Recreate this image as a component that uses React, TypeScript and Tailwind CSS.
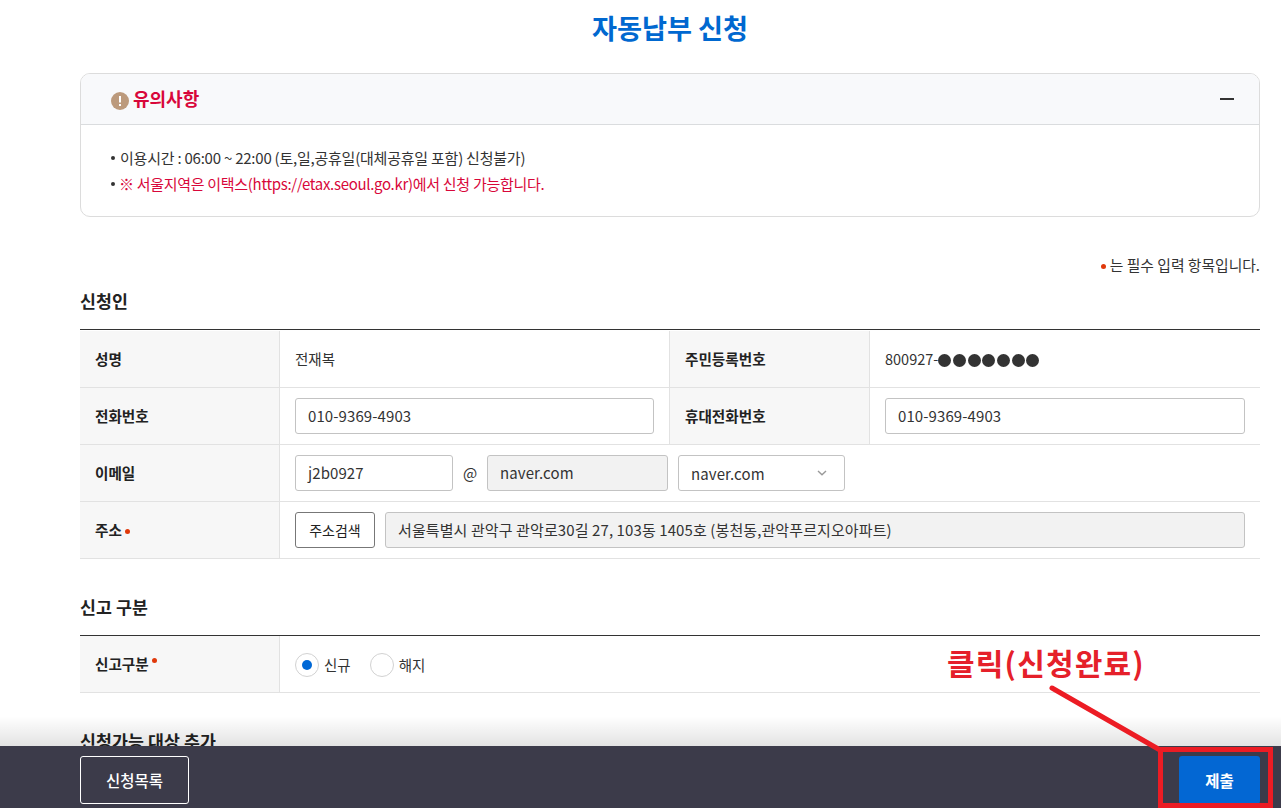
import type { ReactNode } from "react";

const NoticeIcon = () => (
  <svg width="18" height="18" viewBox="0 0 18 18" fill="none">
    <circle cx="9" cy="9" r="9" fill="#bc9a7c" />
    <path d="M8 4h2v6.6H8z" fill="#fff" />
    <path d="M8 12h2v2H8z" fill="#fff" />
  </svg>
);

const ChevronIcon = () => (
  <svg width="10" height="6" viewBox="0 0 10 6" fill="none">
    <path d="M1 1l4 3.8L9 1" stroke="#999" strokeWidth="1.4" />
  </svg>
);

const Required = ({ className = "" }: { className?: string }) => (
  <span className={`inline-block size-[5px] rounded-full bg-[#e0390b] ${className}`} />
);

const SectionTitle = ({ children }: { children: ReactNode }) => (
  <h2 className="h-[27px] text-[17.3px] leading-[26px] font-bold tracking-[0.1px] text-[#222] whitespace-nowrap">
    {children}
  </h2>
);

const Label = ({ children }: { children: ReactNode }) => (
  <div className="flex w-[200px] shrink-0 items-center border-r border-[#e2e2e2] bg-[#f7f7f7] pb-px pl-[15px] text-[14.6px] font-bold text-[#222]">
    {children}
  </div>
);

const Row = ({ children }: { children: ReactNode }) => (
  <div className="flex h-[57px] border-b border-[#e2e2e2]">{children}</div>
);

const Field = ({
  value,
  className = "",
  disabled = false,
}: {
  value: string;
  className?: string;
  disabled?: boolean;
}) => (
  <div
    className={`flex h-9 items-center rounded-[3px] border border-[#c3c3c3] px-3 text-[15px] tracking-[0.1px] whitespace-nowrap ${
      disabled ? "bg-[#f2f2f2]" : "bg-white"
    } ${className}`}
  >
    {value}
  </div>
);

const Radio = ({ label, checked = false }: { label: string; checked?: boolean }) => (
  <label className="flex items-center gap-[5px] text-[14.5px]">
    <span className="flex size-6 items-center justify-center rounded-full border border-[#d2d2d2] bg-white">
      {checked && <span className="size-[10px] rounded-full bg-[#0068d6]" />}
    </span>
    {label}
  </label>
);

const notices = [
  { text: "이용시간 : 06:00 ~ 22:00 (토,일,공휴일(대체공휴일 포함) 신청불가)", warn: false },
  { text: "※ 서울지역은 이택스(https://etax.seoul.go.kr)에서 신청 가능합니다.", warn: true },
];

export default function App() {
  return (
    <div className="relative h-[808px] w-[1281px] overflow-hidden bg-white font-['Noto_Sans_CJK_KR',sans-serif] text-[#333]">
      <main className="ml-20 w-[1180px]">
        <h1 className="h-[73px] pt-[7px] text-center text-[27.2px] leading-[40px] font-bold text-[#0068d0]">
          자동납부 신청
        </h1>

        {/* Notice */}
        <section className="h-36 overflow-hidden rounded-[10px] border border-[#dcdcdc]">
          <div className="flex h-[51px] items-center border-b border-[#dadcde] bg-[#f8f9fb] pr-[25px] pl-[30px]">
            <span className="mt-[3px]">
              <NoticeIcon />
            </span>
            <h2 className="mb-[2px] ml-1 text-[18px] font-bold text-[#d8073a]">유의사항</h2>
            <span className="ml-auto h-[2px] w-[14px] bg-[#333]" />
          </div>
          <ul className="pt-5 pl-[30px]">
            {notices.map((notice) => (
              <li key={notice.text} className="flex h-[26px] items-center">
                <span className="mr-[5px] size-1 rounded-full bg-[#333]" />
                <span
                  className={`text-[15px] whitespace-nowrap ${
                    notice.warn ? "-ml-px tracking-[-0.3px] text-[#d8073a]" : "tracking-[-0.23px]"
                  }`}
                >
                  {notice.text}
                </span>
              </li>
            ))}
          </ul>
        </section>

        <p className="mt-9 flex h-6 items-center justify-end text-[14.8px]">
          <Required className="mt-[3px] mr-1" />는 필수 입력 항목입니다.
        </p>

        {/* Applicant */}
        <section className="mt-[11px]">
          <SectionTitle>신청인</SectionTitle>
          <div className="mt-[14px] border-t border-[#333] pt-px">
            <Row>
              <Label>성명</Label>
              <div className="flex w-[390px] items-center border-r border-[#e2e2e2] px-[15px] text-[14.5px]">
                전재복
              </div>
              <Label>주민등록번호</Label>
              <div className="flex items-center px-[15px] text-[14.5px]">
                800927-
                <span className="mt-[3px] flex gap-[1.7px]">
                  {Array.from({ length: 7 }, (_, i) => (
                    <span key={i} className="size-[13px] rounded-full bg-[#333]" />
                  ))}
                </span>
              </div>
            </Row>
            <Row>
              <Label>전화번호</Label>
              <div className="flex w-[390px] items-center border-r border-[#e2e2e2] px-[15px]">
                <Field value="010-9369-4903" className="w-full" />
              </div>
              <Label>휴대전화번호</Label>
              <div className="flex flex-1 items-center px-[15px]">
                <Field value="010-9369-4903" className="w-full" />
              </div>
            </Row>
            <Row>
              <Label>이메일</Label>
              <div className="flex items-center px-[15px]">
                <Field value="j2b0927" className="w-[158px]" />
                <span className="w-[34px] text-center text-[15px]">@</span>
                <Field value="naver.com" className="w-[181px]" disabled />
                <div className="ml-[10px] flex h-9 w-[167px] items-center justify-between rounded-[3px] border border-[#c3c3c3] pr-[17px] pl-3 text-[15px] tracking-[0.1px]">
                  <span className="mt-[2px]">naver.com</span>
                  <ChevronIcon />
                </div>
              </div>
            </Row>
            <Row>
              <Label>
                주소
                <Required className="mt-[3px] ml-[3px]" />
              </Label>
              <div className="flex flex-1 items-center px-[15px]">
                <button className="h-9 w-20 rounded-[3px] border border-[#777] text-[14px] text-[#222]">
                  주소검색
                </button>
                <Field
                  value="서울특별시 관악구 관악로30길 27, 103동 1405호 (봉천동,관악푸르지오아파트)"
                  className="ml-[10px] flex-1"
                  disabled
                />
              </div>
            </Row>
          </div>
        </section>

        {/* Report type */}
        <section className="mt-[35px]">
          <SectionTitle>신고 구분</SectionTitle>
          <div className="mt-[14px] border-t border-[#333]">
            <Row>
              <Label>
                신고구분
                <Required className="mb-[7px] ml-[3px]" />
              </Label>
              <div className="flex items-center gap-[19px] px-[15px] pt-px">
                <Radio label="신규" checked />
                <Radio label="해지" />
              </div>
            </Row>
          </div>
        </section>

        <section className="mt-[35px]">
          <SectionTitle>신청가능 대상 추가</SectionTitle>
        </section>
      </main>

      {/* Bottom action bar */}
      <footer className="absolute inset-x-0 bottom-0">
        <div className="h-[30px] bg-linear-to-b from-black/0 to-black/11" />
        <div className="flex h-[62px] items-start justify-between bg-[#3c3b4a] pt-[10px] pr-[21px] pl-20">
          <button className="h-12 w-[109px] rounded-[3px] border border-white pt-[2px] text-[15.5px] font-medium text-white">
            신청목록
          </button>
          <button className="h-12 w-[81px] rounded-[3px] bg-[#0367d3] pt-[2px] text-[15.5px] font-bold text-white">
            제출
          </button>
        </div>
      </footer>

      {/* Callout */}
      <p className="absolute top-[640px] left-[947px] text-[30px] leading-[44px] font-bold tracking-[1.2px] whitespace-nowrap text-[#e5202a]">
        클릭(신청완료)
      </p>
      <svg
        className="absolute top-[680px] left-[1040px]"
        width="241"
        height="128"
        viewBox="0 0 241 128"
        fill="none"
        stroke="#ec1c24"
        strokeWidth="5"
      >
        <path d="M12 8l108 62" strokeLinecap="round" />
        <path d="M120.500 69.500h110v56h-110z" />
      </svg>
    </div>
  );
}
